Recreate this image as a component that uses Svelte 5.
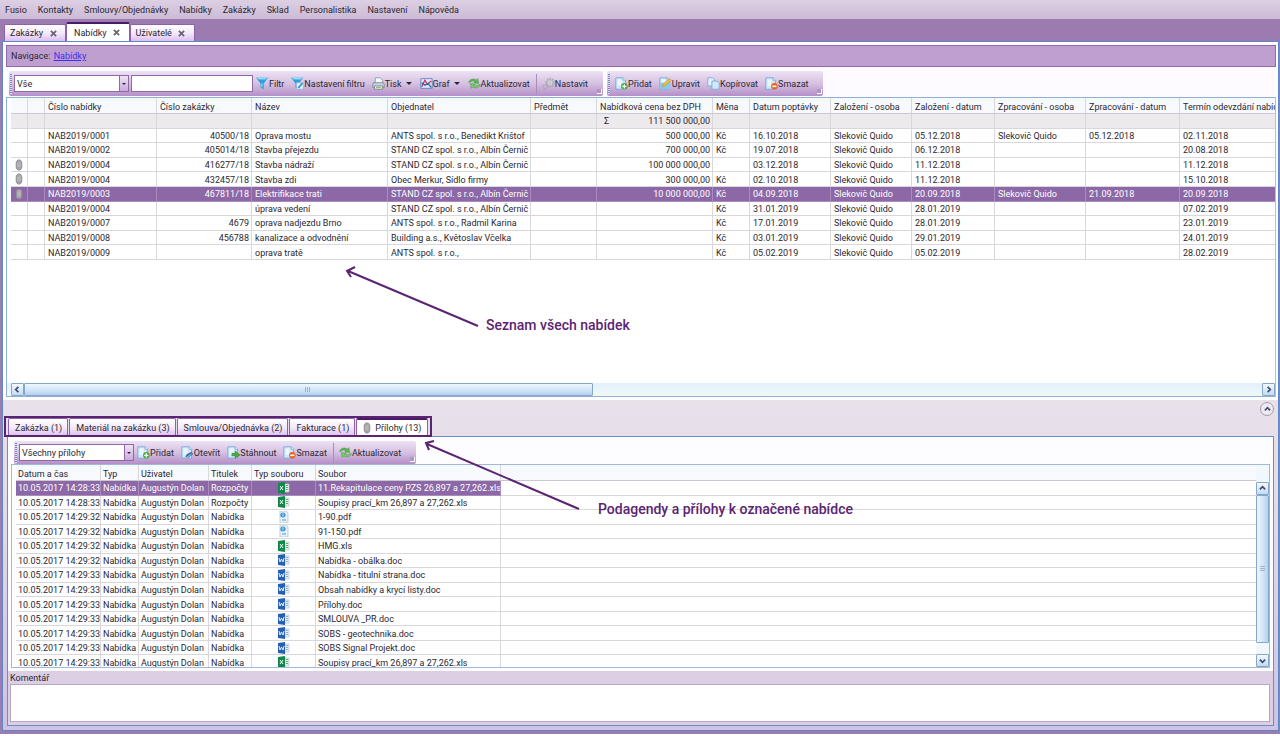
<script lang="ts">
  interface Offer {
    clip: boolean;
    cells: string[];
  }

  const menu = ['Fusio', 'Kontakty', 'Smlouvy/Objednávky', 'Nabídky', 'Zakázky', 'Sklad', 'Personalistika', 'Nastavení', 'Nápověda'];
  const tabs = ['Zakázky', 'Nabídky', 'Uživatelé'];

  const offerTools = [
    { icon: 'filter', label: 'Filtr' },
    { icon: 'filter-set', label: 'Nastavení filtru' },
    { icon: 'print', label: 'Tisk', drop: true },
    { icon: 'chart', label: 'Graf', drop: true },
    { icon: 'refresh', label: 'Aktualizovat' },
    { icon: 'gear', label: 'Nastavit', split: true }
  ];
  const editTools = [
    { icon: 'add', label: 'Přidat' },
    { icon: 'edit', label: 'Upravit' },
    { icon: 'copy', label: 'Kopírovat' },
    { icon: 'delete', label: 'Smazat' }
  ];
  const fileTools = [
    { icon: 'add', label: 'Přidat' },
    { icon: 'open', label: 'Otevřít' },
    { icon: 'download', label: 'Stáhnout' },
    { icon: 'delete', label: 'Smazat' },
    { icon: 'refresh', label: 'Aktualizovat', split: true }
  ];

  const offerColumns = [
    { label: '', width: 17 },
    { label: '', width: 17 },
    { label: 'Číslo nabídky', width: 112 },
    { label: 'Číslo zakázky', width: 95 },
    { label: 'Název', width: 136 },
    { label: 'Objednatel', width: 143 },
    { label: 'Předmět', width: 66 },
    { label: 'Nabídková cena bez DPH', width: 116 },
    { label: 'Měna', width: 37 },
    { label: 'Datum poptávky', width: 81 },
    { label: 'Založení - osoba', width: 81 },
    { label: 'Založení - datum', width: 83 },
    { label: 'Zpracování - osoba', width: 91 },
    { label: 'Zpracování - datum', width: 94 },
    { label: 'Termín odevzdání nabídky', width: 0 }
  ];

  // number, order, name, client, subject, price, currency, asked, by, on, processed by, processed on, due
  const offers: Offer[] = [
    { clip: false, cells: ['NAB2019/0001', '40500/18', 'Oprava mostu', 'ANTS spol. s r.o., Benedikt Krištof', '', '500 000,00', 'Kč', '16.10.2018', 'Slekovič Quido', '05.12.2018', 'Slekovič Quido', '05.12.2018', '02.11.2018'] },
    { clip: false, cells: ['NAB2019/0002', '405014/18', 'Stavba přejezdu', 'STAND CZ spol. s r.o., Albín Černič', '', '700 000,00', 'Kč', '19.07.2018', 'Slekovič Quido', '06.12.2018', '', '', '20.08.2018'] },
    { clip: true, cells: ['NAB2019/0004', '416277/18', 'Stavba nádraží', 'STAND CZ spol. s r.o., Albín Černič', '', '100 000 000,00', '', '03.12.2018', 'Slekovič Quido', '11.12.2018', '', '', '11.12.2018'] },
    { clip: true, cells: ['NAB2019/0004', '432457/18', 'Stavba zdi', 'Obec Merkur, Sídlo firmy', '', '300 000,00', 'Kč', '02.10.2018', 'Slekovič Quido', '11.12.2018', '', '', '15.10.2018'] },
    { clip: true, cells: ['NAB2019/0003', '467811/18', 'Elektrifikace trati', 'STAND CZ spol. s r.o., Albín Černič', '', '10 000 000,00', 'Kč', '04.09.2018', 'Slekovič Quido', '20.09.2018', 'Slekovič Quido', '21.09.2018', '20.09.2018'] },
    { clip: false, cells: ['NAB2019/0004', '', 'úprava vedení', 'STAND CZ spol. s r.o., Albín Černič', '', '', 'Kč', '31.01.2019', 'Slekovič Quido', '28.01.2019', '', '', '07.02.2019'] },
    { clip: false, cells: ['NAB2019/0007', '4679', 'oprava nadjezdu Brno', 'ANTS spol. s r.o., Radmil Karina', '', '', 'Kč', '17.01.2019', 'Slekovič Quido', '28.01.2019', '', '', '23.01.2019'] },
    { clip: false, cells: ['NAB2019/0008', '456788', 'kanalizace a odvodnění', 'Building a.s., Květoslav Včelka', '', '', 'Kč', '03.01.2019', 'Slekovič Quido', '29.01.2019', '', '', '24.01.2019'] },
    { clip: false, cells: ['NAB2019/0009', '', 'oprava tratě', 'ANTS spol. s r.o.,', '', '', 'Kč', '05.02.2019', 'Slekovič Quido', '05.02.2019', '', '', '28.02.2019'] }
  ];

  const subTabs = ['Zakázka (1)', 'Materiál na zakázku (3)', 'Smlouva/Objednávka (2)', 'Fakturace (1)', 'Přílohy (13)'];

  const fileColumns = [
    { label: 'Datum a čas', width: 85 },
    { label: 'Typ', width: 38 },
    { label: 'Uživatel', width: 70 },
    { label: 'Titulek', width: 43 },
    { label: 'Typ souboru', width: 64 },
    { label: 'Soubor', width: 185 },
    { label: '', width: 0 }
  ];

  const files = [
    { time: '14:28:33', title: 'Rozpočty', name: '11.Rekapitulace ceny PZS 26,897 a 27,262.xls' },
    { time: '14:28:33', title: 'Rozpočty', name: 'Soupisy prací_km 26,897 a 27,262.xls' },
    { time: '14:29:32', title: 'Nabídka', name: '1-90.pdf' },
    { time: '14:29:32', title: 'Nabídka', name: '91-150.pdf' },
    { time: '14:29:32', title: 'Nabídka', name: 'HMG.xls' },
    { time: '14:29:32', title: 'Nabídka', name: 'Nabídka - obálka.doc' },
    { time: '14:29:33', title: 'Nabídka', name: 'Nabídka - titulní strana.doc' },
    { time: '14:29:33', title: 'Nabídka', name: 'Obsah nabídky a krycí listy.doc' },
    { time: '14:29:33', title: 'Nabídka', name: 'Přílohy.doc' },
    { time: '14:29:33', title: 'Nabídka', name: 'SMLOUVA _PR.doc' },
    { time: '14:29:33', title: 'Nabídka', name: 'SOBS - geotechnika.doc' },
    { time: '14:29:33', title: 'Nabídka', name: 'SOBS Signal Projekt.doc' },
    { time: '14:29:33', title: 'Nabídka', name: 'Soupisy prací_km 26,897 a 27,262.xls' }
  ];

  let activeTab = $state(1);
  let activeSubTab = $state(4);
  let selectedOffer = $state(4);
  let selectedFile = $state(0);
  let search = $state('');
  let comment = $state('');

  function extension(name: string): string {
    return name.split('.').pop() ?? '';
  }
</script>

{#snippet page()}
  <path d="M1 1h9l3 3v11H1z" fill="#cfe8fa" stroke="#6fa3d8" />
  <path d="M10 1v3h3" fill="#fff" stroke="#6fa3d8" />
  <path d="M3 3h5v8H3z" fill="#e9f6fe" />
{/snippet}

{#snippet icon(name: string)}
  <svg class="icon" viewBox="0 0 16 16" aria-hidden="true">
    {#if name === 'filter' || name === 'filter-set'}
      <path d="M0 1h15l-5.500 7v7l-4-2V8z" fill="#2f9fe0" />
      <path d="M1 1h13l-2 2H3z" fill="#8fdcf7" />
      <path d="M6 8h2v5l-2-1z" fill="#7fd0f4" />
      {#if name === 'filter-set'}
        <path d="M7 7h8v8H7z" fill="#e8f4fc" stroke="#8fb6d6" />
        <path d="M8 13l5-6 2 1-5 6z" fill="#3f8fd0" />
      {/if}
    {:else if name === 'print'}
      <path d="M4 8V1h6l3 3v4z" fill="#f5fafd" stroke="#8396a8" />
      <path d="M2 7h12l1 2v4H1V9z" fill="#c9d3dd" stroke="#71808f" />
      <path d="M3 11h10v4H3z" fill="#eef6e4" stroke="#71808f" />
      <path d="M5 13h6" stroke="#6bb04c" />
    {:else if name === 'chart'}
      <path d="M1 2h14v12H1z" fill="#d9e8f8" stroke="#5a7fb8" />
      <path d="M2 12l4-8 3 5 5-4" fill="none" stroke="#d2304c" stroke-width="1.600" />
      <path d="M2 7l4 3 4-2 4 5" fill="none" stroke="#2f62b8" stroke-width="1.600" />
    {:else if name === 'refresh'}
      <path d="M1 7c0-4 6-6 9-3l2-2 1 6-6-1 2-1c-2-2-5-1-8 1z" fill="#5dbb53" stroke="#2f8a36" stroke-width=".6" />
      <path d="M15 9c0 4-6 6-9 3l-2 2-1-6 6 1-2 1c2 2 5 1 8-1z" fill="#7fcf6b" stroke="#2f8a36" stroke-width=".6" />
    {:else if name === 'gear'}
      <g fill="none" stroke="#a9a7b2">
        <circle cx="10" cy="7" r="5" stroke-width="2" stroke-dasharray="2 1.140" />
        <circle cx="10" cy="7" r="3.500" fill="#dddbe2" />
        <circle cx="10" cy="7" r="1.200" fill="#fff" />
        <circle cx="4" cy="12" r="2.500" stroke-width="2" stroke-dasharray="1.300 .7" />
      </g>
    {:else if name === 'copy'}
      <path d="M1 1h6l2 2v8H1z" fill="#e6f3fd" stroke="#6fa3d8" />
      <path d="M6 5h6l3 2v8H6z" fill="#cfe8fa" stroke="#6fa3d8" />
    {:else}
      {@render page()}
      {#if name === 'add'}
        <circle cx="11.500" cy="11.500" r="4" fill="#4ea83c" />
        <path d="M11.500 9v5M9 11.500h5" stroke="#fff" stroke-width="1.600" />
      {:else if name === 'edit'}
        <path d="M1 7h13v8H1z" fill="#8cc8ee" />
        <path d="M4 12l1-3 8-7 2 2-8 7z" fill="#f2c23c" stroke="#b98720" stroke-width=".7" />
      {:else if name === 'delete'}
        <circle cx="11.500" cy="11.500" r="4" fill="#e8641e" />
        <path d="M9 11.500h5" stroke="#fff" stroke-width="2" />
      {:else if name === 'open'}
        <path d="M5 14l2-4 6-3 2 3-6 4z" fill="#3d6fae" />
        <path d="M5 15l8-5" stroke="#b8d4ee" />
      {:else if name === 'download'}
        <path d="M6 9h4V6l6 5-6 4v-3H6z" fill="#46aa3c" stroke="#2a7a28" stroke-width=".6" />
      {/if}
    {/if}
  </svg>
{/snippet}

{#snippet paperclip()}
  <svg class="clip" viewBox="0 0 8 13" aria-hidden="true">
    <path d="M1 4c0-4 6-4 6 0v5c0 4-6 4-6 0z" fill="#a5a2a6" stroke="#8d8a8f" />
    <path d="M3 4v5M5 3v6" stroke="#c9c7ca" />
  </svg>
{/snippet}

{#snippet fileIcon(type: string)}
  <svg class="file-icon" viewBox="0 0 12 12" role="img" aria-label={type}>
    {#if type === 'pdf'}
      <path d="M2 0h6l2 2v10H2z" fill="#e9f3fb" stroke="#a9bccd" stroke-width=".7" />
      <circle cx="5" cy="4" r="2" fill="none" stroke="#2a86d0" stroke-width="1.200" />
      <path d="M3 4h4" stroke="#2a86d0" />
      <path d="M4 9h4" stroke="#7cb7e4" stroke-width="1.500" />
    {:else}
      <path d="M7 2h4v8H7z" fill="#eef3f1" stroke={type === 'xls' ? '#a6cdb6' : '#a9c0e2'} stroke-width=".7" />
      <path d="M9 3v6" stroke={type === 'xls' ? '#5ea57c' : '#8dabd8'} stroke-dasharray="1 1" stroke-width="2" />
      <path d="M0 1l7-1v12l-7-1z" fill={type === 'xls' ? '#12884a' : '#2660b4'} />
      {#if type === 'xls'}
        <path d="M2 4l3 4M5 4l-3 4" stroke="#fff" />
      {:else}
        <path d="M1 4l1 4 1.500-3L5 8l1-4" fill="none" stroke="#fff" stroke-width=".9" />
      {/if}
    {/if}
  </svg>
{/snippet}

{#snippet chevron(d: string)}
  <svg class="chevron" viewBox="0 0 8 8" aria-hidden="true">
    <path {d} fill="none" stroke="#3d4c70" stroke-width="2" />
  </svg>
{/snippet}

{#snippet tools(items: { icon: string; label: string; drop?: boolean; split?: boolean }[])}
  {#each items as tool}
    {#if tool.split}<span class="separator"></span>{/if}
    <button class="tool">
      {@render icon(tool.icon)}{tool.label}
      {#if tool.drop}<span class="caret"></span>{/if}
    </button>
  {/each}
{/snippet}

<div class="app">
  <nav class="menu">
    {#each menu as item}
      <button>{item}</button>
    {/each}
  </nav>

  <div class="tabs">
    {#each tabs as tab, i}
      <div class="tab" class:active={activeTab === i}>
        <button onclick={() => (activeTab = i)}>{tab}</button>
        <button class="close" aria-label="Zavřít {tab}">
          <svg viewBox="0 0 8 8"><path d="M1 1l6 6M7 1L1 7" stroke="#6b6470" stroke-width="2" /></svg>
        </button>
      </div>
    {/each}
  </div>

  <main class="frame">
    <section class="upper">
      <div class="breadcrumb">Navigace: <a href="#nabidky">Nabídky</a></div>

      <div class="toolbars">
        <div class="toolbar">
          <span class="grip"></span>
          <span class="combo">
            <select aria-label="Pohled"><option>Vše</option></select>
            <span class="combo-arrow"><span class="caret"></span></span>
          </span>
          <input class="search" type="text" aria-label="Hledat" bind:value={search} />
          {@render tools(offerTools)}
          <span class="overflow"></span>
        </div>
        <div class="toolbar">
          <span class="grip"></span>
          {@render tools(editTools)}
          <span class="overflow"></span>
        </div>
      </div>

      <div class="grid-box">
        <div class="grid-view">
          <table class="offers">
            <colgroup>
              {#each offerColumns as col}
                <col style={col.width ? `width: ${col.width}px` : ''} />
              {/each}
            </colgroup>
            <thead>
              <tr>
                {#each offerColumns as col}<th>{col.label}</th>{/each}
              </tr>
            </thead>
            <tbody>
              <tr class="sum">
                {#each offerColumns as _, i}
                  <td class:total={i === 7}>
                    {#if i === 7}<span>Σ</span><span>111 500 000,00</span>{/if}
                  </td>
                {/each}
              </tr>
              {#each offers as offer, row}
                <tr class:selected={selectedOffer === row} onclick={() => (selectedOffer = row)}>
                  <td class="clip-cell">{#if offer.clip}{@render paperclip()}{/if}</td>
                  <td></td>
                  {#each offer.cells as cell, i}
                    <td class:num={i === 1 || i === 5}>{cell}</td>
                  {/each}
                </tr>
              {/each}
            </tbody>
          </table>
        </div>
        <div class="hscroll">
          <button class="scroll-btn" aria-label="Doleva">{@render chevron('M5 1L2 4l3 3')}</button>
          <span class="hthumb"><i></i></span>
          <button class="scroll-btn" aria-label="Doprava">{@render chevron('M3 1l3 3-3 3')}</button>
        </div>
      </div>
    </section>

    <section class="lower">
      <div class="splitter">
        <button class="collapse" aria-label="Sbalit">{@render chevron('M1 5l3-3 3 3')}</button>
      </div>

      <div class="subtabs">
        {#each subTabs as tab, i}
          <button class="subtab" class:active={activeSubTab === i} onclick={() => (activeSubTab = i)}>
            {#if i === 4}{@render paperclip()}{/if}{tab}
          </button>
        {/each}
      </div>

      <div class="panel">
        <div class="panel-top">
          <div class="toolbar small">
            <span class="grip"></span>
            <span class="combo">
              <select aria-label="Filtr příloh"><option>Všechny přílohy</option></select>
              <span class="combo-arrow"><span class="caret"></span></span>
            </span>
            {@render tools(fileTools)}
            <span class="overflow"></span>
          </div>

          <div class="files-box">
            <div class="files-view">
              <table class="files">
                <colgroup>
                  {#each fileColumns as col}
                    <col style={col.width ? `width: ${col.width}px` : ''} />
                  {/each}
                </colgroup>
                <thead>
                  <tr>
                    {#each fileColumns as col}<th>{col.label}</th>{/each}
                  </tr>
                </thead>
                <tbody>
                  {#each files as file, row}
                    <tr class:selected={selectedFile === row} onclick={() => (selectedFile = row)}>
                      <td>10.05.2017 {file.time}</td>
                      <td>Nabídka</td>
                      <td>Augustýn Dolan</td>
                      <td>{file.title}</td>
                      <td class="type">{@render fileIcon(extension(file.name))}</td>
                      <td>{file.name}</td>
                      <td class="rest"></td>
                    </tr>
                  {/each}
                </tbody>
              </table>
            </div>
            <div class="vscroll">
              <button class="scroll-btn" aria-label="Nahoru">{@render chevron('M1 5l3-3 3 3')}</button>
              <span class="vthumb"><i></i></span>
              <button class="scroll-btn" aria-label="Dolů">{@render chevron('M1 3l3 3 3-3')}</button>
            </div>
          </div>
        </div>

        <label class="comment-label" for="comment">Komentář</label>
        <textarea id="comment" class="comment" bind:value={comment}></textarea>
      </div>
    </section>
  </main>

  <svg class="notes">
    <g fill="none" stroke="#5b2472" stroke-width="2">
      <path d="M478 326L348 271M355 267l-8 4 4 6" />
      <path d="M579 509L427 444M434 441l-8 2 3 7" />
    </g>
    <text x="486" y="330">Seznam všech nabídek</text>
    <text x="598" y="514">Podagendy a přílohy k označené nabídce</text>
  </svg>
</div>

<style>
  :global(body) {
    background: #fff;
  }

  .app {
    position: relative;
    display: flex;
    flex-direction: column;
    box-sizing: border-box;
    min-height: 100vh;
    padding-bottom: 2px;
    overflow: hidden;
    background: #9b7bb0;
    background-clip: content-box;
    color: #2b2730;
    font-family: Roboto, "Open Sans", sans-serif;
    font-size: 9px;
    line-height: 14px;
  }

  .app * {
    box-sizing: border-box;
  }

  button,
  input,
  select,
  textarea {
    margin: 0;
    padding: 0;
    border: 0;
    background: none;
    color: inherit;
    font: inherit;
    white-space: nowrap;
  }

  /* Menu */
  .menu {
    display: flex;
    gap: 11px;
    height: 19px;
    padding: 0 5px;
    background: linear-gradient(#dccfe3, #cdbbd6);
  }

  .menu button {
    height: 19px;
  }

  /* Document tabs */
  .tabs {
    display: flex;
    align-items: flex-end;
    height: 22px;
    padding-left: 4px;
  }

  .tab {
    display: flex;
    align-items: center;
    gap: 6px;
    height: 17px;
    padding: 0 8px 0 5px;
    border: 1px solid #8d62a8;
    border-bottom: 0;
    border-radius: 2px 2px 0 0;
    background: linear-gradient(#fff, #f4e9fb 50%, #dcc0ee);
  }

  .tab.active {
    height: 19px;
    padding: 0 8px 0 7px;
    border-top: 2px solid #4b1a66;
    background: #fff;
  }

  .close {
    width: 8px;
    height: 7px;
    line-height: 0;
  }

  .close svg {
    width: 7px;
    height: 7px;
  }

  .frame {
    display: flex;
    flex: 1;
    flex-direction: column;
    margin: 0 1px 3px 2px;
    border: 1px solid #6286c4;
    background: #fff;
  }

  .upper {
    display: flex;
    flex: 1;
    flex-direction: column;
    padding: 3px 2px 3px 3px;
  }

  .breadcrumb {
    height: 22px;
    padding-left: 4px;
    border: 1px solid #9468ae;
    background: #bf9fd0;
    line-height: 21px;
  }

  .breadcrumb a {
    margin-left: 1px;
    color: #3b2ff0;
  }

  /* Toolbars */
  .toolbars {
    display: flex;
    gap: 4px;
    padding: 4px 3px 1px;
    background: #fdfbff;
  }

  .toolbar {
    display: flex;
    align-items: center;
    width: fit-content;
    height: 25px;
    border-radius: 2px;
    background: linear-gradient(#ede2f4, #d6c1e1 50%, #b48fc8);
  }

  .toolbar.small {
    height: 23px;
  }

  .toolbar.small .combo {
    margin-right: 0;
  }

  .grip {
    width: 2px;
    height: 20px;
    margin: 0 2px 0 1px;
    background: repeating-linear-gradient(#6f86c0 0 1px, #e8def0 1px 2px);
  }

  .combo {
    position: relative;
    display: flex;
    width: 115px;
    height: 17px;
    margin-right: 2px;
    border: 1px solid #8d6aa6;
    background: #fff;
  }

  .combo select {
    flex: 1;
    padding-left: 2px;
    appearance: none;
  }

  .combo-arrow {
    display: flex;
    align-items: center;
    justify-content: center;
    width: 9px;
    border-left: 1px solid #8d6aa6;
    background: linear-gradient(#efe2f6, #cba9dc);
    pointer-events: none;
  }

  .caret {
    border: 3px solid transparent;
    border-top-color: #2e2536;
    border-bottom: 0;
  }

  .combo-arrow .caret {
    border-width: 2px;
    border-bottom: 0;
  }

  .search {
    width: 122px;
    height: 17px;
    padding: 0 2px;
    border: 1px solid #8d6aa6;
    background: #fff;
  }

  .tool {
    display: flex;
    align-items: center;
    height: 19px;
    padding: 0 4px 0 3px;
  }

  .tool .caret {
    margin: 0 1px 0 4px;
  }

  .icon {
    width: 13px;
    height: 13px;
  }

  .separator {
    width: 1px;
    height: 20px;
    margin: 0 2px;
    background: #a98cbb;
  }

  .overflow {
    align-self: flex-end;
    width: 5px;
    height: 5px;
    margin: 0 1px 2px 5px;
    border: 1px solid #fff;
    border-width: 0 1px 1px 0;
    background: #b195c2;
  }

  /* Tables */
  .grid-box {
    display: flex;
    flex: 1;
    flex-direction: column;
    border: 1px solid #8fb0d4;
    border-right-color: #a9c3e2;
  }

  .grid-view {
    flex: 1;
    padding-left: 4px;
    overflow: hidden;
  }

  table {
    width: 100%;
    border-collapse: separate;
    border-spacing: 0;
    table-layout: fixed;
  }

  .offers {
    height: 162px;
  }

  .files {
    height: 205px;
  }

  th,
  td {
    height: 14px;
    padding: 1px 0 0 3px;
    border-right: 1px solid #d9d6dc;
    border-bottom: 1px solid #d9d6dc;
    line-height: 12px;
    overflow: hidden;
    text-align: left;
    white-space: nowrap;
  }

  th {
    height: 16px;
    padding-top: 2px;
    background: linear-gradient(#f5f9fd, #f9fafe);
    border-bottom-color: #c9c8d2;
    font-weight: 400;
  }

  .files th,
  .files td {
    padding-left: 2px;
  }

  td:last-child,
  th:last-child {
    border-right: 0;
  }

  .sum td {
    background: #edeaee;
  }

  .total span:last-child {
    float: right;
    padding-right: 2px;
  }

  .total span:first-child {
    padding-left: 4px;
  }

  .num {
    text-align: right;
    padding-right: 2px;
  }

  .selected td {
    background: #8c68a6;
    border-color: #a98cbd;
    color: #fff;
  }

  .offers .clip-cell {
    padding: 0;
    text-align: center;
    line-height: 0;
  }

  .clip {
    width: 8px;
    height: 12px;
  }

  .files .type {
    padding: 0;
    text-align: center;
    line-height: 0;
  }

  .file-icon {
    width: 12px;
    height: 12px;
  }

  .files .selected .rest {
    background: #fff;
    border-color: #d9d6dc;
  }

  /* Scrollbars */
  .scroll-btn {
    display: flex;
    align-items: center;
    justify-content: center;
    width: 13px;
    height: 13px;
    border: 1px solid #86a6cc;
    border-radius: 1px;
    background: linear-gradient(#f4f9fe, #c2dbf2);
  }

  .chevron {
    width: 7px;
    height: 7px;
  }

  .hscroll {
    display: flex;
    height: 13px;
    padding-left: 4px;
    background: linear-gradient(#e3f1fb, #f0f8fe);
  }

  .hthumb,
  .vthumb {
    display: flex;
    align-items: center;
    justify-content: center;
    border: 1px solid #86a6cc;
    border-radius: 1px;
    background: linear-gradient(#eef7fe, #d3e7f8 50%, #b4d1ee);
  }

  .hthumb {
    width: 45%;
    margin-right: auto;
  }

  .hthumb i {
    width: 6px;
    height: 5px;
    background: repeating-linear-gradient(90deg, #9db3cc 0 1px, transparent 1px 2px);
  }

  .vscroll {
    display: flex;
    flex-direction: column;
    width: 13px;
    padding-top: 17px;
    background: #f0f7fd;
  }

  .vthumb {
    height: 148px;
    margin-bottom: auto;
    background: linear-gradient(90deg, #eef7fe, #d3e7f8 50%, #b4d1ee);
  }

  .vthumb i {
    width: 5px;
    height: 6px;
    background: repeating-linear-gradient(#9db3cc 0 1px, transparent 1px 2px);
  }

  /* Lower part */
  .lower {
    padding: 0 4px 4px;
    background: linear-gradient(#e8e1ea, #e4dcea 30%, #cdc3e2);
  }

  .splitter {
    display: flex;
    justify-content: flex-end;
    height: 18px;
    padding-top: 2px;
  }

  .collapse {
    display: flex;
    align-items: center;
    justify-content: center;
    width: 14px;
    height: 14px;
    border: 1px solid #a39aab;
    border-radius: 50%;
    background: #efeaf1;
  }

  .subtabs {
    position: relative;
    display: flex;
    gap: 1px;
    width: fit-content;
    height: 18px;
    margin-left: 1px;
  }

  /* highlight frame round the whole tab strip */
  .subtabs::after {
    position: absolute;
    inset: -2px -4px -1px -4px;
    border: 2px solid #5b2472;
    content: "";
    pointer-events: none;
  }

  .subtab {
    display: flex;
    align-items: center;
    gap: 4px;
    padding: 0 5px 0 6px;
    border: 1px solid #8d62a8;
    border-bottom: 0;
    border-radius: 2px 2px 0 0;
    background: linear-gradient(#fff, #f4e9fb 50%, #dcc0ee);
  }

  .subtab.active {
    padding: 0 6px;
    border-top: 2px solid #4b1a66;
    background: #fff;
  }

  .panel {
    display: flex;
    flex-direction: column;
    padding: 0 3px 3px 2px;
    border: 1px solid #6a8fc8;
    background: #dccfe3;
  }

  .panel-top {
    margin: 0 -3px 0 -2px;
    padding: 4px 3px 3px;
    background: #fdfcff;
  }

  .panel-top .toolbar {
    margin-left: 3px;
  }

  .files-box {
    display: flex;
    height: 204px;
    border: 1px solid #9fb9d6;
    background: #fff;
  }

  .files-view {
    flex: 1;
    min-width: 0;
    padding-left: 4px;
    overflow: hidden;
  }

  .comment-label {
    height: 13px;
    line-height: 14px;
  }

  .comment {
    width: 100%;
    height: 38px;
    border: 1px solid #b7a7c6;
    background: #fff;
    resize: none;
  }

  .notes {
    position: absolute;
    top: 0;
    left: 0;
    width: 100%;
    height: 100%;
    pointer-events: none;
  }

  .notes text {
    fill: #5b2472;
    font-family: Roboto, sans-serif;
    font-size: 14px;
    font-weight: 500;
  }
</style>
